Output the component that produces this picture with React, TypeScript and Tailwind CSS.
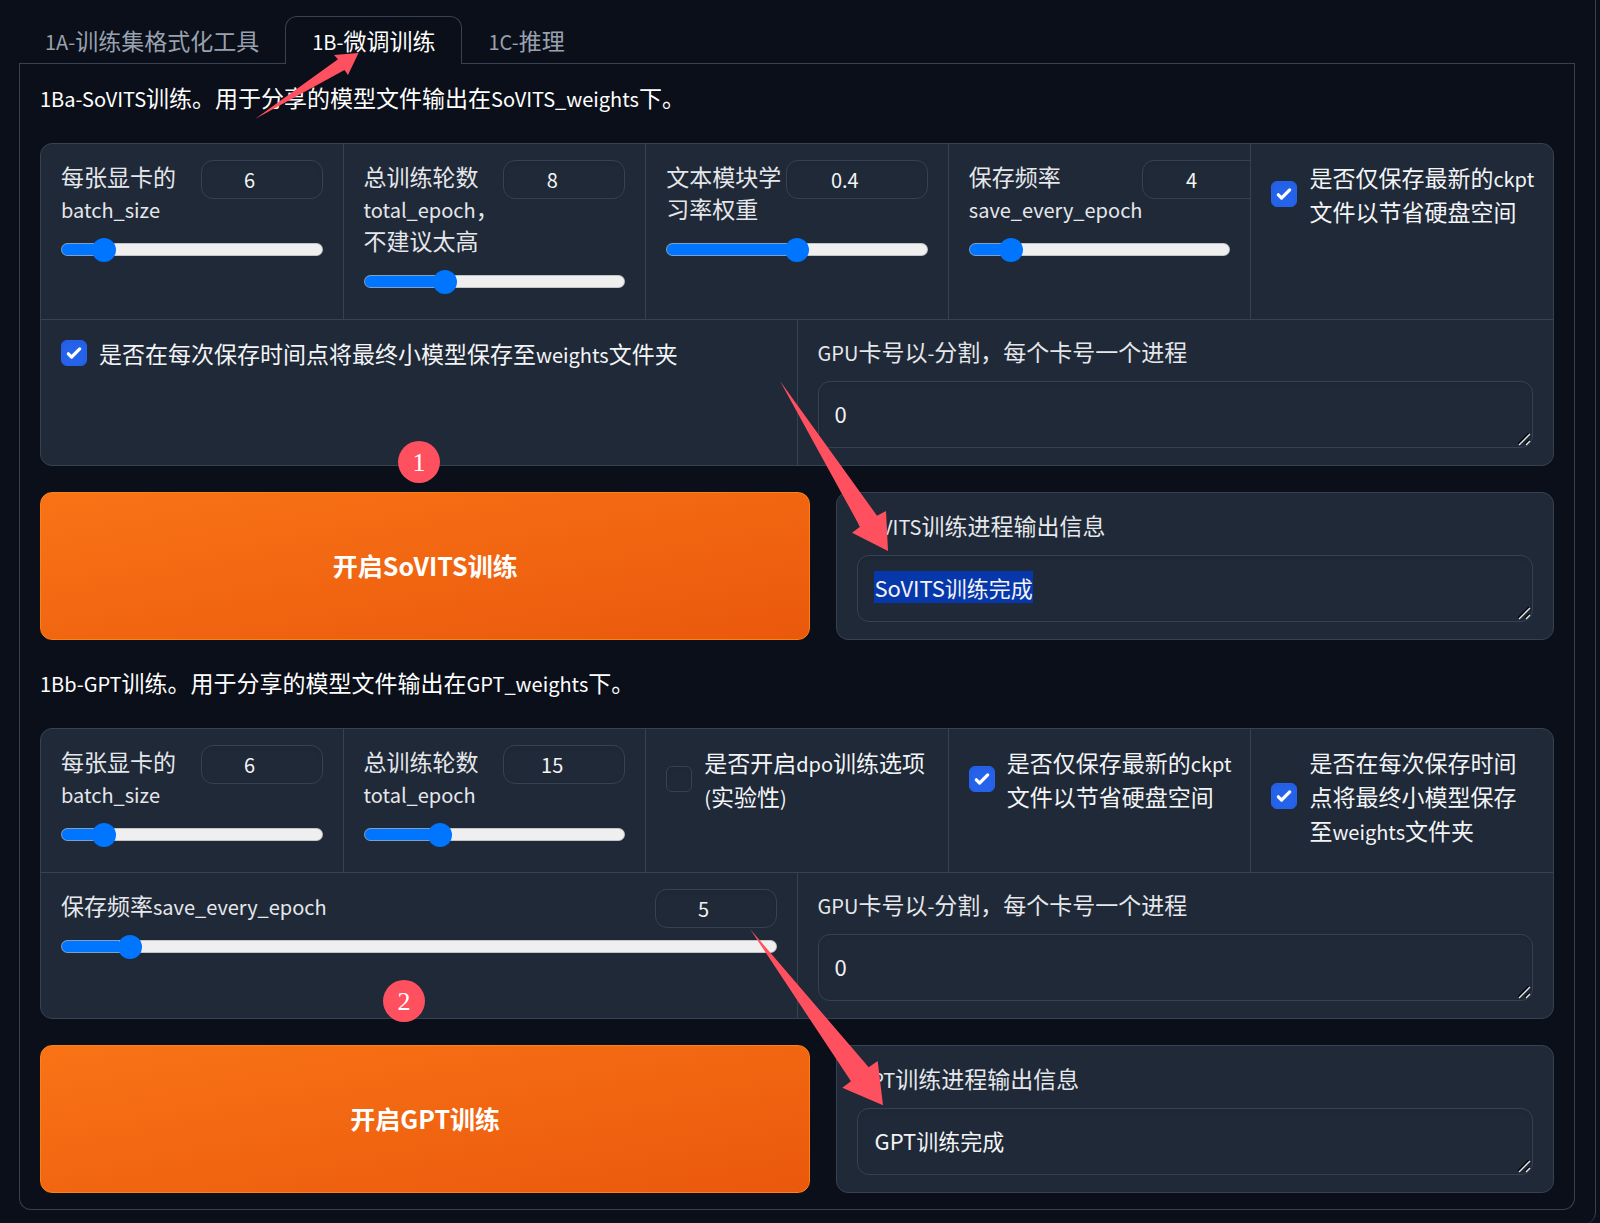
import React, { useEffect, useRef, useState } from 'react';

interface SliderProps {
  id: string;
  label: string;
  min: number;
  max: number;
  step?: number;
  initial: number;
  wide?: boolean;
}

interface CheckProps {
  id: string;
  label: string;
  initial?: boolean;
}

interface TextBoxProps {
  id: string;
  label: string;
  initial: string;
  selected?: boolean;
}

// Latin runs are set a little smaller than the Chinese text around them
function Mixed({ text }: { text: string }) {
  const parts = text.split(/([\x20-\x7e]+)/).filter(Boolean);
  return (
    <>
      {parts.map((part, i) =>
        /^[\x20-\x7e]/.test(part) ? (
          <span key={i} className="text-[20px] leading-none">{part}</span>
        ) : (
          part
        )
      )}
    </>
  );
}

function Slider({ id, label, min, max, step = 1, initial, wide }: SliderProps) {
  const [value, setValue] = useState(initial);
  const percent = ((value - min) / (max - min)) * 100;

  return (
    <div>
      <div className="flex items-start justify-between">
        <label htmlFor={id} className="mb-[7px] min-w-min leading-8 text-gray-200">
          <Mixed text={label} />
        </label>
        <input
          type="number"
          aria-label={label}
          value={value}
          min={min}
          max={max}
          step={step}
          onChange={(e) => setValue(Number(e.target.value))}
          className={`h-[39px] shrink-0 appearance-none rounded-xl border border-[#374151] pr-6 text-center text-[20px] text-gray-100 shadow-inner outline-none [&::-webkit-inner-spin-button]:appearance-none ${wide ? 'w-[142px]' : 'w-[122px]'}`}
        />
      </div>
      <input
        id={id}
        type="range"
        value={value}
        min={min}
        max={max}
        step={step}
        onChange={(e) => setValue(Number(e.target.value))}
        className="mt-3 block h-[13px] w-full appearance-none rounded-full border border-[#b2b2b2]/70 bg-origin-border [&::-webkit-slider-thumb]:size-6 [&::-webkit-slider-thumb]:appearance-none [&::-webkit-slider-thumb]:rounded-full [&::-webkit-slider-thumb]:bg-[#0075ff]"
        style={{ backgroundImage: `linear-gradient(to right, #0075ff ${percent}%, #efefef ${percent}%)` }}
      />
    </div>
  );
}

function Check({ id, label, initial = false }: CheckProps) {
  const [checked, setChecked] = useState(initial);

  return (
    <label htmlFor={id} className="-mr-1 flex items-center gap-3 leading-[34px] text-gray-100">
      <span className="relative size-[26px] shrink-0">
        <input
          id={id}
          type="checkbox"
          checked={checked}
          onChange={(e) => setChecked(e.target.checked)}
          className="block size-[26px] appearance-none rounded-md border border-[#374151] shadow-inner checked:border-[#2563eb] checked:bg-[#2563eb]"
        />
        {checked && (
          <svg viewBox="0 0 16 16" fill="white" className="pointer-events-none absolute inset-0 size-full">
            <path d="M12.207 4.793a1 1 0 010 1.414l-5 5a1 1 0 01-1.414 0l-2-2a1 1 0 011.414-1.414L6.5 9.086l4.293-4.293a1 1 0 011.414 0z" />
          </svg>
        )}
      </span>
      <span>
        <Mixed text={label} />
      </span>
    </label>
  );
}

function TextBox({ id, label, initial, selected }: TextBoxProps) {
  const [value, setValue] = useState(initial);
  const ref = useRef<HTMLTextAreaElement>(null);

  useEffect(() => {
    if (selected) ref.current?.select();
  }, [selected]);

  return (
    <div>
      <label htmlFor={id} className="mb-[15px] block leading-[30px] text-gray-200">
        <Mixed text={label} />
      </label>
      <div className="relative">
        <textarea
          id={id}
          ref={ref}
          rows={1}
          value={value}
          onChange={(e) => setValue(e.target.value)}
          className="block h-[67px] w-full resize-none overflow-hidden rounded-xl border border-[#374151] px-4 py-4 text-[22px] leading-[31px] text-gray-100 shadow-inner outline-none selection:bg-[#0638ab] selection:text-gray-100"
        />
        <svg viewBox="0 0 13 13" className="pointer-events-none absolute right-0.5 bottom-0.5 size-[13px]" fill="none">
          <path d="M0 11L11 0M7 11L11 7" stroke="#000" strokeWidth="1.4" />
          <path d="M1 12L12 1M8 12L12 8" stroke="#e5e7eb" strokeWidth="1.4" />
        </svg>
      </div>
    </div>
  );
}

function Cell({ children }: { children: React.ReactNode }) {
  return (
    <div className="min-w-0 flex-1 overflow-hidden border-l border-[#374151] px-5 pt-4 pb-[17px] first:border-l-0">
      {children}
    </div>
  );
}

function StartButton({ children }: { children: string }) {
  return (
    <button className="rounded-xl border border-[#fb8215] bg-linear-to-br from-[#f97316] to-[#ea580c] text-[25px] font-semibold text-white">
      {children}
    </button>
  );
}

function Badge({ children, className }: { children: string; className: string }) {
  return (
    <span className={`absolute flex size-[42px] -translate-x-1/2 items-center justify-center rounded-full bg-[#ff5060] font-['Liberation_Serif',serif] text-[26px] text-white ${className}`}>
      {children}
    </span>
  );
}

export default function App() {
  return (
    <div className="bg-[#0b0f19] pr-1 font-['Noto_Sans_CJK_SC',sans-serif] text-[23px] text-white">
      <div className="rounded-b-xl border-r border-[#374151] pt-4 pr-5 pb-[14px] pl-[19px]">
        <div role="tablist" className="flex h-12 border-b border-[#374151] text-gray-400">
          <button role="tab" className="border-t border-transparent px-[26px]">
            <Mixed text="1A-训练集格式化工具" />
          </button>
          <button
            role="tab"
            aria-selected="true"
            className="relative -mb-px rounded-t-xl border border-b-0 border-[#374151] bg-[#0b0f19] px-[26px] pb-px text-white"
          >
            <Mixed text="1B-微调训练" />
            <svg viewBox="0 0 104 66" className="absolute -bottom-[55px] -left-[31px] z-10 h-[66px] w-[104px]">
              <path d="M0 66L83 6.3 79 2 103.5 0 93 22 89.5 17z" fill="#ff5060" />
            </svg>
          </button>
          <button role="tab" className="border-t border-transparent px-[26px]">
            <Mixed text="1C-推理" />
          </button>
        </div>

        <div className="flex flex-col gap-[26px] rounded-b-xl border border-t-0 border-[#374151] px-5 pt-[17px] pb-4">
          <p className="pb-1 leading-8">
            <Mixed text="1Ba-SoVITS训练。用于分享的模型文件输出在SoVITS_weights下。" />
          </p>
          <div className="relative rounded-xl border border-[#374151] bg-[#1f2937]">
            <div className="flex min-h-[176px] border-b border-[#374151]">
              <Cell><Slider id="s-batch" label="每张显卡的batch_size" min={1} max={40} initial={6} /></Cell>
              <Cell><Slider id="s-epoch" label="总训练轮数total_epoch，不建议太高" min={1} max={25} initial={8} /></Cell>
              <Cell><Slider id="s-lr" label="文本模块学习率权重" min={0.2} max={0.6} step={0.05} initial={0.4} wide /></Cell>
              <Cell><Slider id="s-save" label="保存频率save_every_epoch" min={1} max={25} initial={4} /></Cell>
              <Cell><Check id="s-latest" label="是否仅保存最新的ckpt文件以节省硬盘空间" initial /></Cell>
            </div>
            <div className="flex">
              <Cell><Check id="s-weights" label="是否在每次保存时间点将最终小模型保存至weights文件夹" initial /></Cell>
              <Cell><TextBox id="s-gpu" label="GPU卡号以-分割，每个卡号一个进程" initial="0" /></Cell>
            </div>
            <Badge className="-bottom-[18px] left-1/4">1</Badge>
          </div>
          <div className="grid grid-cols-[771fr_718fr] gap-[26px]">
            <StartButton>开启SoVITS训练</StartButton>
            <div className="relative rounded-xl border border-[#374151] bg-[#1f2937] px-5 py-[17px]">
              <TextBox id="s-out" label="SoVITS训练进程输出信息" initial="SoVITS训练完成" selected />
              <svg viewBox="0 0 108 170" className="absolute -top-[112px] -left-[57px] h-[170px] w-[108px]">
                <path d="M0 0L97 134.7 106 130 108 170 72 151.7 80 145.7z" fill="#ff5060" />
              </svg>
            </div>
          </div>

          <p className="pb-1 leading-8">
            <Mixed text="1Bb-GPT训练。用于分享的模型文件输出在GPT_weights下。" />
          </p>
          <div className="relative rounded-xl border border-[#374151] bg-[#1f2937]">
            <div className="flex min-h-[144px] border-b border-[#374151]">
              <Cell><Slider id="g-batch" label="每张显卡的batch_size" min={1} max={40} initial={6} /></Cell>
              <Cell><Slider id="g-epoch" label="总训练轮数total_epoch" min={2} max={50} initial={15} /></Cell>
              <Cell><Check id="g-dpo" label="是否开启dpo训练选项(实验性)" /></Cell>
              <Cell><Check id="g-latest" label="是否仅保存最新的ckpt文件以节省硬盘空间" initial /></Cell>
              <Cell><Check id="g-weights" label="是否在每次保存时间点将最终小模型保存至weights文件夹" initial /></Cell>
            </div>
            <div className="flex">
              <Cell><Slider id="g-save" label="保存频率save_every_epoch" min={1} max={50} initial={5} /></Cell>
              <Cell><TextBox id="g-gpu" label="GPU卡号以-分割，每个卡号一个进程" initial="0" /></Cell>
            </div>
            <Badge className="-bottom-[4px] left-[24%]">2</Badge>
          </div>
          <div className="grid grid-cols-[771fr_718fr] gap-[26px]">
            <StartButton>开启GPT训练</StartButton>
            <div className="relative rounded-xl border border-[#374151] bg-[#1f2937] px-5 py-[17px]">
              <TextBox id="g-out" label="GPT训练进程输出信息" initial="GPT训练完成" />
              <svg viewBox="0 0 134 177" className="absolute -top-[117px] -left-[87px] h-[177px] w-[134px]">
                <path d="M0 0L118.7 138.3 127.7 132 133 176.3 92.3 158.7 101 152.3z" fill="#ff5060" />
              </svg>
            </div>
          </div>
        </div>
      </div>
    </div>
  );
}
